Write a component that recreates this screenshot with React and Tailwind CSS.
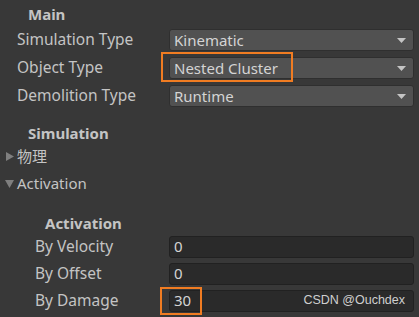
import React from 'react'

const font = { fontFamily: '"Noto Sans", "Noto Sans CJK SC", sans-serif' }

function Dropdown({ value }) {
    return (
        <div className="flex h-[22px] items-center justify-between rounded-[3px] border border-[#2f2f2f] bg-[#515151] pl-[4px] pr-[7px] text-[15px] text-[#d4d4d4]">
            <span>{value}</span>
            <svg width="9" height="5" viewBox="0 0 9 5"><path d="M0 0h9L4.5 5z" fill="#c4c4c4" /></svg>
        </div>
    )
}

function Field({ value, children }) {
    return (
        <div className="flex h-[22px] items-center justify-between rounded-[3px] border border-[#212121] bg-[#2a2a2a] pl-[4px] pr-[8px] text-[15px] text-[#d4d4d4]">
            <span>{value}</span>
            {children}
        </div>
    )
}

function Row({ label, indent, children, highlight, h = 'h-[28px]' }) {
    return (
        <div className={`flex ${h} items-center`}>
            <div className={`w-[169px] shrink-0 text-[15.5px] text-[#c4c4c4] ${indent}`}>{label}</div>
            <div className="relative mr-[5px] flex-1">
                {children}
                {highlight}
            </div>
        </div>
    )
}

function Foldout({ label, open }) {
    return (
        <div className="flex h-[27px] items-center text-[15px] text-[#c4c4c4]">
            <div className="flex w-[17px] justify-center pl-[2px]">
                {open
                    ? <svg width="9" height="8" viewBox="0 0 9 8"><path d="M0 0h9L4.5 8z" fill="#7f7f7f" /></svg>
                    : <svg width="8" height="9" viewBox="0 0 8 9"><path d="M0 0v9l8-4.5z" fill="#7f7f7f" /></svg>}
            </div>
            <span>{label}</span>
        </div>
    )
}

export default function App() {
    return (
        <div className="h-[317px] w-[419px] overflow-hidden bg-[#383838]" style={font}>
            <div className="flex h-[26px] items-end pb-[1px] pl-[28px] text-[15px] font-bold text-[#c4c4c4]">Main</div>
            <Row label="Simulation Type" indent="pl-[17px]"><Dropdown value="Kinematic" /></Row>
            <Row
                label="Object Type"
                indent="pl-[17px]"
                highlight={<div className="absolute left-[-8px] top-[-5px] h-[30px] w-[132px] border-2 border-[#f07c22]" />}
            >
                <Dropdown value="Nested Cluster" />
            </Row>
            <Row label="Demolition Type" indent="pl-[17px]"><Dropdown value="Runtime" /></Row>

            <div className="mt-[13px] flex h-[20px] items-center pl-[28px] text-[15px] font-bold text-[#c4c4c4]">Simulation</div>
            <Foldout label="物理" />
            <Foldout label="Activation" open />

            <div className="mt-[16px] flex h-[20px] items-center pl-[45px] text-[15px] font-bold text-[#c4c4c4]">Activation</div>
            <div className="flex flex-col">
                <Row h="h-[27px]" label="By Velocity" indent="pl-[35px]"><Field value="0" /></Row>
                <Row h="h-[27px]" label="By Offset" indent="pl-[35px]"><Field value="0" /></Row>
                <Row
                    h="h-[27px]"
                    label="By Damage"
                    indent="pl-[35px]"
                    highlight={<div className="absolute left-[-9px] top-[-3px] h-[28px] w-[42px] border-2 border-[#f07c22]" />}
                >
                    <Field value="30">
                        <span className="text-[12.5px] text-[#cfcfcf]" style={{ fontFamily: '"Liberation Sans", Arial, sans-serif' }}>CSDN @Ouchdex</span>
                    </Field>
                </Row>
            </div>
        </div>
    )
}
